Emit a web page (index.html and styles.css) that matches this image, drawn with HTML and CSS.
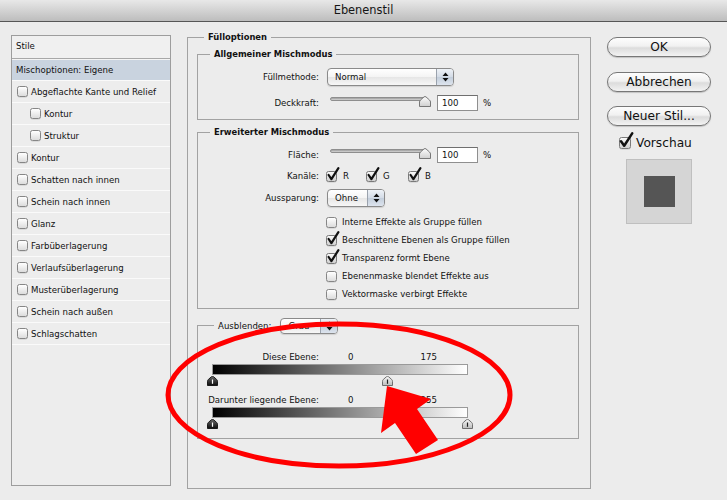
FILE: index.html
```html
<!DOCTYPE html>
<html lang="de">
<head>
<meta charset="utf-8">
<title>Ebenenstil</title>
<link rel="stylesheet" href="styles.css">
</head>
<body>
<div class="window">
  <header class="titlebar">Ebenenstil</header>
  <div class="content">
    <aside class="styles-list">
      <div class="sl-head">Stile</div>
      <div class="sl-row sel">Mischoptionen: Eigene</div>
      <div class="sl-row"><span class="cb"></span>Abgeflachte Kante und Relief</div>
      <div class="sl-row sub"><span class="cb"></span>Kontur</div>
      <div class="sl-row sub"><span class="cb"></span>Struktur</div>
      <div class="sl-row"><span class="cb"></span>Kontur</div>
      <div class="sl-row"><span class="cb"></span>Schatten nach innen</div>
      <div class="sl-row"><span class="cb"></span>Schein nach innen</div>
      <div class="sl-row"><span class="cb"></span>Glanz</div>
      <div class="sl-row"><span class="cb"></span>Farbüberlagerung</div>
      <div class="sl-row"><span class="cb"></span>Verlaufsüberlagerung</div>
      <div class="sl-row"><span class="cb"></span>Musterüberlagerung</div>
      <div class="sl-row"><span class="cb"></span>Schein nach außen</div>
      <div class="sl-row"><span class="cb"></span>Schlagschatten</div>
    </aside>

    <fieldset class="grp outer">
      <legend class="lg-outer">Fülloptionen</legend>

      <fieldset class="grp g1">
        <legend class="lg-inner">Allgemeiner Mischmodus</legend>
        <div class="form">
          <label class="lbl">Füllmethode:</label>
          <div class="select sel-normal"><span class="sv">Normal</span><span class="sa"><svg width="7" height="10" viewBox="0 0 7 10"><path d="M3.5 0.5 L6.5 4 H0.5 Z M3.5 9.5 L6.5 6 H0.5 Z" fill="#111"/></svg></span></div>

          <label class="lbl">Deckkraft:</label>
          <div class="ctl">
            <div class="slider"><div class="track"></div><svg class="sthumb" width="12" height="11" viewBox="0 0 12 11"><defs><linearGradient id="tg1" x1="0" y1="0" x2="0" y2="1"><stop offset="0" stop-color="#fdfdfd"/><stop offset="1" stop-color="#cfcfcf"/></linearGradient></defs><path d="M0.5 10.5 V6 Q0.5 5 1.5 4 L5 0.9 Q6 0.2 7 0.9 L10.5 4 Q11.5 5 11.5 6 V10.5 Z" fill="url(#tg1)" stroke="#777"/></svg></div>
            <div class="num">100</div><span class="pct">%</span>
          </div>
        </div>
      </fieldset>

      <fieldset class="grp g2">
        <legend class="lg-inner">Erweiterter Mischmodus</legend>
        <div class="form form2">
          <label class="lbl">Fläche:</label>
          <div class="ctl">
            <div class="slider"><div class="track"></div><svg class="sthumb" width="12" height="11" viewBox="0 0 12 11"><defs><linearGradient id="tg2" x1="0" y1="0" x2="0" y2="1"><stop offset="0" stop-color="#fdfdfd"/><stop offset="1" stop-color="#cfcfcf"/></linearGradient></defs><path d="M0.5 10.5 V6 Q0.5 5 1.5 4 L5 0.9 Q6 0.2 7 0.9 L10.5 4 Q11.5 5 11.5 6 V10.5 Z" fill="url(#tg2)" stroke="#777"/></svg></div>
            <div class="num">100</div><span class="pct">%</span>
          </div>

          <label class="lbl">Kanäle:</label>
          <div class="channels">
            <span class="chan"><span class="cb on"><svg class="tick" width="14" height="15" viewBox="0 0 14 15"><path d="M2.6 8 L5.4 12.2 L12.4 1.2" fill="none" stroke="#111" stroke-width="2.2" stroke-linecap="round" stroke-linejoin="round"/></svg></span>R</span>
            <span class="chan"><span class="cb on"><svg class="tick" width="14" height="15" viewBox="0 0 14 15"><path d="M2.6 8 L5.4 12.2 L12.4 1.2" fill="none" stroke="#111" stroke-width="2.2" stroke-linecap="round" stroke-linejoin="round"/></svg></span>G</span>
            <span class="chan"><span class="cb on"><svg class="tick" width="14" height="15" viewBox="0 0 14 15"><path d="M2.6 8 L5.4 12.2 L12.4 1.2" fill="none" stroke="#111" stroke-width="2.2" stroke-linecap="round" stroke-linejoin="round"/></svg></span>B</span>
          </div>

          <label class="lbl">Aussparung:</label>
          <div class="select sel-small"><span class="sv">Ohne</span><span class="sa"><svg width="7" height="10" viewBox="0 0 7 10"><path d="M3.5 0.5 L6.5 4 H0.5 Z M3.5 9.5 L6.5 6 H0.5 Z" fill="#111"/></svg></span></div>

          <div class="opts">
            <div class="opt"><span class="cb"></span>Interne Effekte als Gruppe füllen</div>
            <div class="opt"><span class="cb on"><svg class="tick" width="14" height="15" viewBox="0 0 14 15"><path d="M2.6 8 L5.4 12.2 L12.4 1.2" fill="none" stroke="#111" stroke-width="2.2" stroke-linecap="round" stroke-linejoin="round"/></svg></span>Beschnittene Ebenen als Gruppe füllen</div>
            <div class="opt"><span class="cb on"><svg class="tick" width="14" height="15" viewBox="0 0 14 15"><path d="M2.6 8 L5.4 12.2 L12.4 1.2" fill="none" stroke="#111" stroke-width="2.2" stroke-linecap="round" stroke-linejoin="round"/></svg></span>Transparenz formt Ebene</div>
            <div class="opt"><span class="cb"></span>Ebenenmaske blendet Effekte aus</div>
            <div class="opt"><span class="cb"></span>Vektormaske verbirgt Effekte</div>
          </div>
        </div>
      </fieldset>

      <fieldset class="grp g3">
        <legend class="lg-blend"><span class="lg-flex">Ausblenden:<span class="select sel-small sel-grau"><span class="sv">Grau</span><span class="sa"><svg width="7" height="10" viewBox="0 0 7 10"><path d="M3.5 0.5 L6.5 4 H0.5 Z M3.5 9.5 L6.5 6 H0.5 Z" fill="#111"/></svg></span></span></span></legend>

        <div class="brow"><span class="blbl">Diese Ebene:</span><span class="bv0">0</span><span class="bv1">175</span></div>
        <div class="bar"></div>
        <div class="thumbs">
          <svg class="bthumb" style="left:0px" width="11" height="10" viewBox="0 0 11 10"><defs><linearGradient id="bk1" x1="0" y1="0" x2="0" y2="1"><stop offset="0" stop-color="#6a6a6a"/><stop offset="1" stop-color="#0c0c0c"/></linearGradient></defs><path d="M0.5 9.5 V5.3 Q0.5 4.3 1.4 3.4 L4.5 0.7 Q5.5 0 6.5 0.7 L9.6 3.4 Q10.5 4.3 10.5 5.3 V9.5 Z" fill="url(#bk1)" stroke="#1a1a1a"/><path d="M5.5 3.5 V7.8" stroke="#fff" stroke-width="1.2"/></svg>
          <svg class="bthumb" style="left:175px" width="11" height="10" viewBox="0 0 11 10"><defs><linearGradient id="wt1" x1="0" y1="0" x2="0" y2="1"><stop offset="0" stop-color="#f6f6f6"/><stop offset="1" stop-color="#bdbdbd"/></linearGradient></defs><path d="M0.5 9.5 V5.3 Q0.5 4.3 1.4 3.4 L4.5 0.7 Q5.5 0 6.5 0.7 L9.6 3.4 Q10.5 4.3 10.5 5.3 V9.5 Z" fill="url(#wt1)" stroke="#6e6e6e"/><path d="M5.5 3.5 V7.8" stroke="#222" stroke-width="1.2"/></svg>
        </div>

        <div class="brow brow2"><span class="blbl">Darunter liegende Ebene:</span><span class="bv0">0</span><span class="bv1">255</span></div>
        <div class="bar"></div>
        <div class="thumbs">
          <svg class="bthumb" style="left:0px" width="11" height="10" viewBox="0 0 11 10"><defs><linearGradient id="bk2" x1="0" y1="0" x2="0" y2="1"><stop offset="0" stop-color="#6a6a6a"/><stop offset="1" stop-color="#0c0c0c"/></linearGradient></defs><path d="M0.5 9.5 V5.3 Q0.5 4.3 1.4 3.4 L4.5 0.7 Q5.5 0 6.5 0.7 L9.6 3.4 Q10.5 4.3 10.5 5.3 V9.5 Z" fill="url(#bk2)" stroke="#1a1a1a"/><path d="M5.5 3.5 V7.8" stroke="#fff" stroke-width="1.2"/></svg>
          <svg class="bthumb" style="left:255px" width="11" height="10" viewBox="0 0 11 10"><defs><linearGradient id="wt2" x1="0" y1="0" x2="0" y2="1"><stop offset="0" stop-color="#f6f6f6"/><stop offset="1" stop-color="#bdbdbd"/></linearGradient></defs><path d="M0.5 9.5 V5.3 Q0.5 4.3 1.4 3.4 L4.5 0.7 Q5.5 0 6.5 0.7 L9.6 3.4 Q10.5 4.3 10.5 5.3 V9.5 Z" fill="url(#wt2)" stroke="#6e6e6e"/><path d="M5.5 3.5 V7.8" stroke="#222" stroke-width="1.2"/></svg>
        </div>
      </fieldset>
    </fieldset>

    <div class="side">
      <button class="btn btn-ok">OK</button>
      <button class="btn">Abbrechen</button>
      <button class="btn">Neuer Stil...</button>
      <div class="preview-toggle"><span class="cb big on"><svg class="tick" width="16" height="17" viewBox="0 0 16 17"><path d="M3 9.2 L6.2 13.8 L14.2 1.4" fill="none" stroke="#111" stroke-width="2.5" stroke-linecap="round" stroke-linejoin="round"/></svg></span><span class="pv-label">Vorschau</span></div>
      <div class="preview"><div class="swatch"></div></div>
    </div>
  </div>

  <svg class="annot" width="727" height="500" viewBox="0 0 727 500">
    <ellipse cx="339" cy="395" rx="171" ry="71" fill="none" stroke="#ff0000" stroke-width="5"/>
    <polygon points="387,386 431,399 417,409 438,440 416,454 395,423 381,433" fill="#ff0000"/>
  </svg>
</div>
</body>
</html>
```

FILE: styles.css
```css
* { box-sizing: border-box; }

html, body {
  margin: 0;
  padding: 0;
  background: #ececec;
}

body {
  font-family: "DejaVu Sans", sans-serif;
  font-size: 8.6px;
  color: #111;
}

.window {
  position: relative;
  width: 727px;
  height: 500px;
  overflow: hidden;
  background: #ececec;
}

.titlebar {
  height: 22px;
  line-height: 21px;
  text-align: center;
  font-size: 11.4px;
  color: #151515;
  background: linear-gradient(#e8e8e8, #bdbdbd);
  border-bottom: 1px solid #565656;
}

.content {
  display: flex;
  align-items: flex-start;
  padding-left: 11px;
}

/* left styles list */
.styles-list {
  width: 160px;
  height: 451px;
  margin-top: 13px;
  border: 1px solid #9d9d9d;
  background: #ededed;
}

.sl-head {
  height: 23px;
  line-height: 21px;
  padding-left: 4px;
  border-bottom: 1px solid #a8a8a8;
  background: #f0f0f0;
}

.sl-row {
  display: flex;
  align-items: center;
  height: 22px;
  padding-left: 5px;
  border-bottom: 1px solid #fafafa;
}

.sl-row.sel {
  padding-left: 4px;
  background: #c9d3df;
  border-top: 1px solid #f4f4f4;
}

.sl-row.sub { padding-left: 18px; }

/* checkbox */
.cb {
  position: relative;
  display: inline-block;
  flex: none;
  width: 11px;
  height: 11px;
  margin-right: 3px;
  border: 1px solid #868686;
  border-radius: 2.5px;
  background: linear-gradient(#ffffff, #ececec 55%, #dcdcdc);
  box-shadow: 0 0.5px 0.5px rgba(0, 0, 0, 0.15);
}

.cb.on {
  border-color: #7a7a7a;
  background: linear-gradient(#fafafa, #e2e2e2 55%, #cfcfcf);
}

.cb .tick {
  position: absolute;
  left: -1px;
  top: -5px;
}

.cb.big {
  width: 12px;
  height: 12px;
  margin-right: 5px;
}

.cb.big .tick { left: -2px; top: -6px; }

/* groups */
.grp {
  margin: 0;
  padding: 0;
  min-width: 0;
  border: 1px solid #a2a2a2;
}

legend {
  padding: 0 4px;
  line-height: 12px;
}

.outer {
  width: 404px;
  height: 458px;
  margin-top: 9px;
  margin-left: 16px;
  padding: 5px 11px 0 9px;
}

.lg-outer {
  margin-left: 7px;
  font-weight: bold;
  font-size: 8.4px;
}

.lg-inner {
  margin-left: 12px;
  font-weight: bold;
  font-size: 8.4px;
}

.g1 { padding: 8px 0 8px 0; }

.g2 {
  margin-top: 6px;
  padding: 9px 0 5px 0;
}

.g3 {
  margin-top: 8px;
  padding: 17px 0 8px 0;
}

.lg-blend {
  margin-left: 16px;
  padding: 0 4px;
}

.lg-flex {
  display: flex;
  align-items: center;
  height: 17px;
}

.form {
  display: grid;
  grid-template-columns: 121px auto;
  column-gap: 8px;
  row-gap: 9px;
  align-items: center;
  justify-items: start;
}

.form2 { row-gap: 5px; }

.lbl {
  justify-self: end;
  text-align: right;
}

/* popup select */
.select {
  display: flex;
  height: 18px;
  border: 1px solid #8a8a8a;
  border-radius: 4px;
  overflow: hidden;
  background: linear-gradient(#ffffff, #f4f4f4 50%, #e6e6e6 52%, #f7f7f7);
  box-shadow: 0 1px 1px rgba(0, 0, 0, 0.12);
}

.sel-normal { width: 127px; }
.sel-small { width: 58px; }

.sel-grau {
  height: 16px;
  margin-left: 9px;
}

.sv {
  flex: 1;
  padding-left: 7px;
  line-height: 16px;
  white-space: nowrap;
}

.sel-grau .sv { line-height: 14px; }

.sa {
  width: 17px;
  display: flex;
  align-items: center;
  justify-content: center;
  border-left: 1px solid #9aa2ad;
  background: linear-gradient(#eef2f7, #d3dbe6 50%, #c3cedb 52%, #dde4ee);
}

/* slider + number */
.ctl {
  display: flex;
  align-items: center;
  height: 16px;
}

.slider {
  position: relative;
  align-self: flex-start;
  width: 101px;
  height: 12px;
  margin-left: 3px;
  margin-top: 1px;
}

.track {
  position: absolute;
  left: 0;
  top: 1px;
  width: 96px;
  height: 4px;
  border-radius: 2px;
  border: 1px solid #8e8e8e;
  background: linear-gradient(#9c9c9c, #d6d6d6);
}

.sthumb {
  position: absolute;
  left: 89px;
  top: 0;
}

.num {
  width: 41px;
  height: 16px;
  margin-left: 6px;
  padding-left: 4px;
  line-height: 14px;
  background: #fff;
  border: 1px solid #8f8f8f;
  border-top-color: #6f6f6f;
}

.pct { margin-left: 5px; }

/* channels */
.channels {
  display: flex;
  align-items: center;
  height: 16px;
  margin-left: -1px;
}

.chan {
  display: flex;
  align-items: center;
}

.chan .cb { margin-right: 6px; }
.chan:nth-child(1) { width: 40px; }
.chan:nth-child(2) { width: 42px; }

/* options list */
.opts {
  grid-column: 2;
  margin-left: -1px;
  margin-top: 1px;
}

.opt {
  display: flex;
  align-items: center;
  height: 18px;
}

.opt .cb { margin-right: 5px; }

/* blend-if */
.brow {
  display: flex;
  height: 12px;
  line-height: 12px;
}

.brow2 { margin-top: 7px; }

.blbl {
  width: 121px;
  text-align: right;
  white-space: nowrap;
}

.bv0 {
  width: 30px;
  margin-left: 29px;
}

.bv1 {
  width: 59px;
  text-align: right;
}

.bar {
  width: 256px;
  height: 11px;
  margin: 1px 0 0 14px;
  border: 1px solid #9a9a9a;
  background: linear-gradient(to right, #000000, #ffffff);
}

.thumbs {
  position: relative;
  height: 11px;
  margin: 1px 0 0 14px;
}

.bthumb {
  position: absolute;
  top: 0;
  margin-left: -5px;
}

/* right side */
.side {
  display: flex;
  flex-direction: column;
  align-items: center;
  width: 104px;
  margin-top: 15px;
  margin-left: 16px;
}

.btn {
  width: 104px;
  height: 20px;
  margin: 0;
  padding: 0;
  font-family: "DejaVu Sans", sans-serif;
  font-size: 12.2px;
  color: #111;
  border: 1px solid #777;
  border-radius: 10px;
  background: linear-gradient(#fdfdfd, #f1f1f1 45%, #dcdcdc 55%, #f3f3f3);
  box-shadow: 0 1px 1px rgba(0, 0, 0, 0.18);
}

.btn + .btn { margin-top: 15px; }
.btn:nth-child(3) { margin-top: 14px; }

.preview-toggle {
  display: flex;
  align-items: center;
  align-self: flex-start;
  height: 14px;
  margin-top: 10px;
  margin-left: 12px;
  font-size: 12.2px;
}

.pv-label { line-height: 14px; }

.preview {
  display: flex;
  align-items: center;
  justify-content: center;
  width: 66px;
  height: 65px;
  margin-top: 9px;
  background: #d5d5d5;
  border: 1px solid #bfbfbf;
}

.swatch {
  width: 31px;
  height: 31px;
  background: #555555;
}

/* annotation overlay */
.annot {
  position: absolute;
  left: 0;
  top: 0;
  pointer-events: none;
}
```
